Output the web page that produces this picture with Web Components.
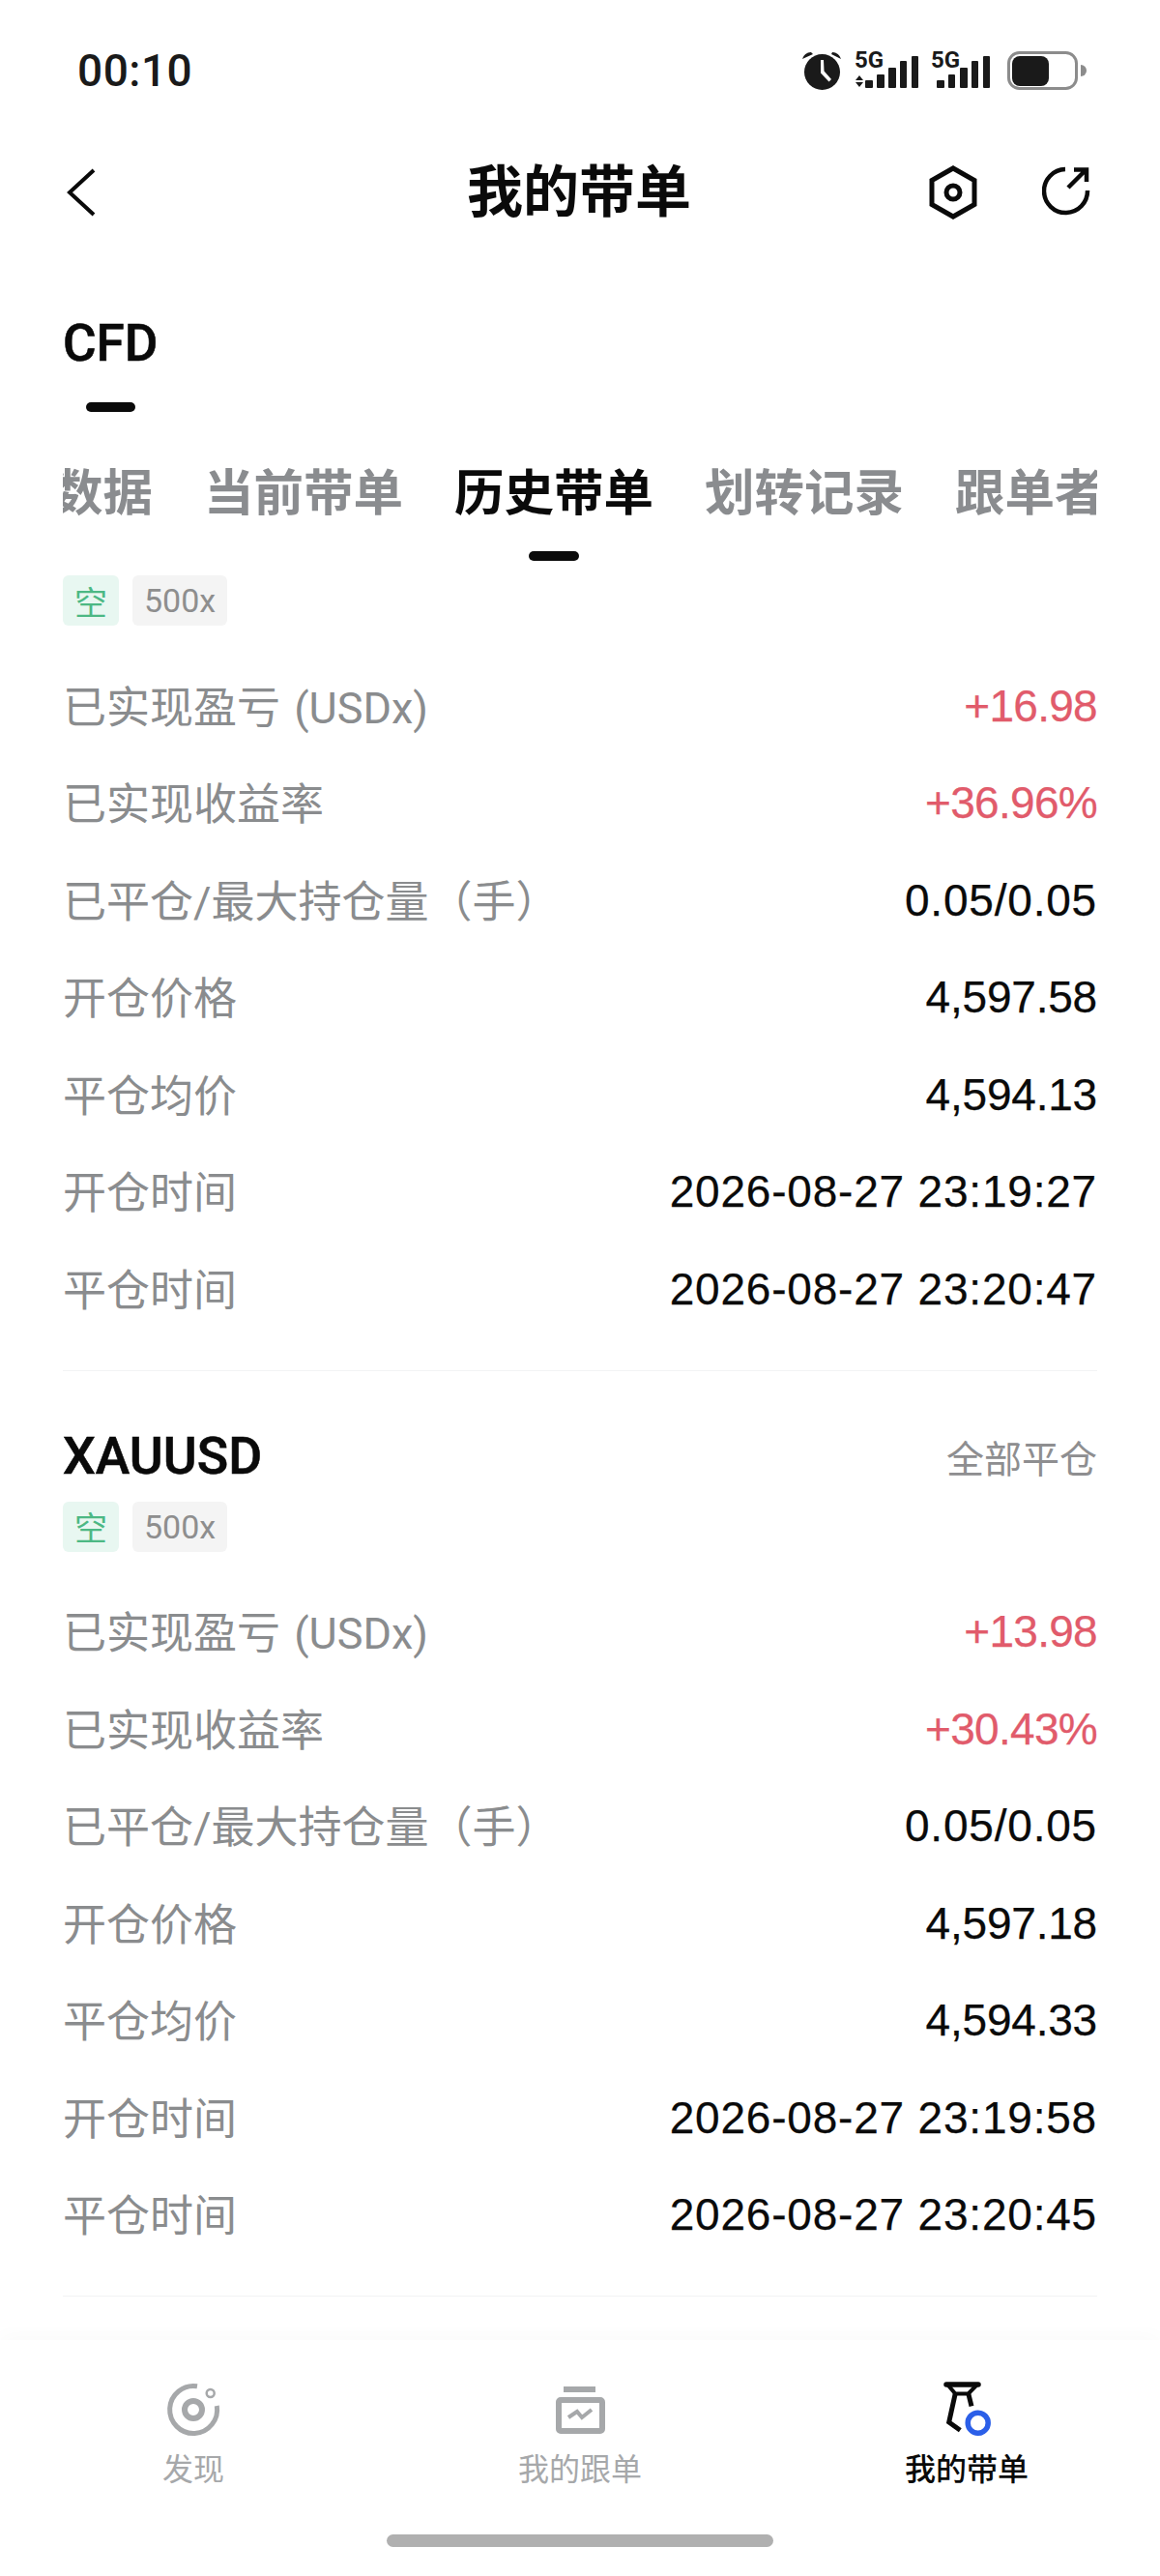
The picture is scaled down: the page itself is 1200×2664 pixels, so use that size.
<!DOCTYPE html>
<html lang="zh-CN">
<head>
<meta charset="utf-8">
<title>我的带单</title>
<style>
html, body { margin: 0; background: #fff; }
body {
    width: 1200px;
    height: 2664px;
    overflow: hidden;
    display: flex;
    flex-direction: column;
    font-family: Roboto, "Noto Sans CJK SC", sans-serif;
    color: #0a0a0a;
}
</style>
</head>
<body>
<status-bar></status-bar>
<nav-header>我的带单</nav-header>
<main-list>
    <order-card>
        <order-row tone="up" value="+16.98">已实现盈亏 (USDx)</order-row>
        <order-row tone="up" value="+36.96%">已实现收益率</order-row>
        <order-row kind="ratio" value="0.05/0.05">已平仓/最大持仓量（手）</order-row>
        <order-row value="4,597.58">开仓价格</order-row>
        <order-row value="4,594.13">平仓均价</order-row>
        <order-row kind="date" value="2026-08-27 23:19:27">开仓时间</order-row>
        <order-row kind="date" value="2026-08-27 23:20:47">平仓时间</order-row>
    </order-card>
    <order-card symbol="XAUUSD" action="全部平仓">
        <order-row tone="up" value="+13.98">已实现盈亏 (USDx)</order-row>
        <order-row tone="up" value="+30.43%">已实现收益率</order-row>
        <order-row kind="ratio" value="0.05/0.05">已平仓/最大持仓量（手）</order-row>
        <order-row value="4,597.18">开仓价格</order-row>
        <order-row value="4,594.33">平仓均价</order-row>
        <order-row kind="date" value="2026-08-27 23:19:58">开仓时间</order-row>
        <order-row kind="date" value="2026-08-27 23:20:45">平仓时间</order-row>
    </order-card>
</main-list>
<tab-bar></tab-bar>

<script>
class StatusBar extends HTMLElement {
    constructor() {
        super()
        this.shadowDOM = this.attachShadow({mode : "open"})
    }
    connectedCallback() {
        this.shadowDOM.innerHTML = `
            <style>
            :host { display: flex; align-items: center; justify-content: space-between; height: 146px; padding: 0 74px 0 80px; box-sizing: border-box; }
            .time { font-size: 46px; font-weight: 500; line-height: 146px; letter-spacing: .5px; color: #1a1a1a; }
            svg { display: block; overflow: visible; }
            text { font-family: Roboto, sans-serif; font-weight: 700; font-size: 24px; fill: #1a1a1a; }
            </style>
            <span class="time">00:10</span>
            <svg width="300" height="44" viewBox="0 0 300 44">
                <g fill="#1a1a1a">
                    <circle cx="24.5" cy="23.5" r="18.5"/>
                    <path d="M4 10 A9 9 0 0 1 13 3 L15 5 Z"/>
                    <path d="M44 10 A9 9 0 0 0 35 3 L34 5 Z"/>
                    <path d="M23 11 L26 11 L26.5 22.5 L34 31 L31.5 33.5 L23 24.5 Z" fill="#fff"/>
                    <text x="58" y="19">5G</text>
                    <path d="M63 27 L67 32 L59 32 Z M59 34 L67 34 L63 39 Z"/>
                    <rect x="69" y="32" width="8" height="8" rx="1"/>
                    <rect x="81" y="26" width="8" height="14" rx="1"/>
                    <rect x="93" y="19" width="8" height="21" rx="1"/>
                    <rect x="105" y="12" width="7" height="28" rx="1"/>
                    <rect x="117" y="7" width="7" height="33" rx="1"/>
                    <text x="137" y="19">5G</text>
                    <rect x="143" y="32" width="8" height="8" rx="1"/>
                    <rect x="155" y="26" width="7" height="14" rx="1"/>
                    <rect x="167" y="19" width="8" height="21" rx="1"/>
                    <rect x="179" y="12" width="7" height="28" rx="1"/>
                    <rect x="191" y="7" width="7" height="33" rx="1"/>
                    <rect x="221" y="7" width="38" height="31" rx="8"/>
                </g>
                <rect x="217.5" y="3.5" width="70" height="37" rx="11" fill="none" stroke="#8c8c8c" stroke-width="3"/>
                <path d="M292 16 A6 6 0 0 1 292 28 Z" fill="#8c8c8c"/>
            </svg>
        `
    }
}
customElements.define("status-bar", StatusBar)

class NavHeader extends HTMLElement {
    constructor() {
        super()
        this.shadowDOM = this.attachShadow({mode : "open"})
    }
    connectedCallback() {
        this.shadowDOM.innerHTML = `
            <style>
            :host { display: grid; grid-template-columns: 1fr auto 1fr; align-items: center; height: 106px; padding: 0 72px 0 68px; }
            h1 { margin: 0 0 0 2px; font-size: 58px; font-weight: 700; line-height: 106px; color: #0a0a0a; }
            .actions { display: flex; justify-content: flex-end; gap: 67px; }
            svg { display: block; fill: none; stroke: #0a0a0a; }
            </style>
            <svg width="32" height="52" viewBox="0 0 32 52" stroke-width="4"><path d="M29 3 L4 26 L29 49"/></svg>
            <h1><slot></slot></h1>
            <div class="actions">
                <svg width="50" height="56" viewBox="0 0 50 56" stroke-width="5">
                    <path d="M25 3 L47 15.5 L47 40.5 L25 53 L3 40.5 L3 15.5 Z"/>
                    <circle cx="25" cy="28" r="7"/>
                </svg>
                <svg width="50" height="52" viewBox="0 0 50 52" stroke-width="4.5">
                    <path d="M24 4 A22.5 22.5 0 1 0 47 26"/>
                    <path d="M27 23 L45 5 M33 4.5 L46 4.5 L46 17"/>
                </svg>
            </div>
        `
    }
}
customElements.define("nav-header", NavHeader)

class CoinTitle extends HTMLElement {
    constructor() {
        super()
        this.shadowDOM = this.attachShadow({mode : "open"})
    }
    connectedCallback() {
        this.shadowDOM.innerHTML = `
            <style>
            :host { display: block; padding: 0 65px; }
            .name { display: inline-flex; flex-direction: column; align-items: center; gap: 30px; font-size: 53px; font-weight: 500; line-height: 62px; -webkit-text-stroke: .6px #0a0a0a; }
            .mark { width: 51px; height: 10px; border-radius: 5px; background: #0a0a0a; }
            </style>
            <div class="name"><slot></slot><span class="mark"></span></div>
        `
    }
}
customElements.define("coin-title", CoinTitle)

class PageTab extends HTMLElement {
    constructor() {
        super()
        this.shadowDOM = this.attachShadow({mode : "open"})
    }
    connectedCallback() {
        this.shadowDOM.innerHTML = `
            <style>
            :host { display: flex; flex-direction: column; align-items: center; gap: 28px; flex: none; font-size: 51.5px; font-weight: 700; line-height: 62px; color: #8a8c8f; white-space: nowrap; }
            :host([active]) { color: #0a0a0a; }
            .mark { width: 52px; height: 10px; border-radius: 5px; }
            :host([active]) .mark { background: #0a0a0a; }
            </style>
            <slot></slot>
            <span class="mark"></span>
        `
    }
}
customElements.define("page-tab", PageTab)

class PageTabs extends HTMLElement {
    constructor() {
        super()
        this.shadowDOM = this.attachShadow({mode : "open"})
    }
    connectedCallback() {
        this.shadowDOM.innerHTML = `
            <style>
            :host { display: block; margin: 0 65px; overflow: hidden; }
            .track { display: flex; gap: 53px; margin-left: -10px; }
            </style>
            <div class="track"><slot></slot></div>
        `
    }
}
customElements.define("page-tabs", PageTabs)

class MainList extends HTMLElement {
    constructor() {
        super()
        this.shadowDOM = this.attachShadow({mode : "open"})
    }
    connectedCallback() {
        this.shadowDOM.innerHTML = `
            <style>
            :host { display: flex; flex-direction: column; flex: 1; min-height: 0; overflow: hidden; }
            .title { margin-top: 72px; }
            .tabs { margin-top: 54px; margin-bottom: 15px; }
            </style>
            <coin-title class="title">CFD</coin-title>
            <page-tabs class="tabs">
                <page-tab>数据</page-tab>
                <page-tab>当前带单</page-tab>
                <page-tab active>历史带单</page-tab>
                <page-tab>划转记录</page-tab>
                <page-tab>跟单者</page-tab>
            </page-tabs>
            <slot></slot>
        `
    }
}
customElements.define("main-list", MainList)

class TagPill extends HTMLElement {
    constructor() {
        super()
        this.shadowDOM = this.attachShadow({mode : "open"})
    }
    connectedCallback() {
        this.shadowDOM.innerHTML = `
            <style>
            :host { display: inline-flex; align-items: center; height: 52px; padding: 0 12px; border-radius: 6px; font-size: 34px; background: #f4f4f4; color: #8e8e8e; }
            :host([tone="short"]) { background: #e8f7f1; color: #4cb884; }
            </style>
            <slot></slot>
        `
    }
}
customElements.define("tag-pill", TagPill)

class OrderCard extends HTMLElement {
    constructor() {
        super()
        this.shadowDOM = this.attachShadow({mode : "open"})
    }
    connectedCallback() {
        const symbol = this.getAttribute("symbol")
        const action = this.getAttribute("action")
        this.shadowDOM.innerHTML = `
            <style>
            :host { display: block; margin: 0 65px; padding-bottom: 35px; border-bottom: 1.5px solid #f2f3f4; }
            :host(:not(:first-of-type)) { padding-top: 53px; }
            .head { display: flex; align-items: center; justify-content: space-between; height: 70px; margin-bottom: 12px; }
            .symbol { font-size: 53.5px; font-weight: 500; -webkit-text-stroke: .6px #0a0a0a; color: #0a0a0a; }
            .action { font-size: 39px; color: #8e8e90; }
            .tags { display: flex; gap: 14px; margin-bottom: 31px; }
            </style>
            ${symbol ? `<div class="head"><span class="symbol">${symbol}</span><span class="action">${action}</span></div>` : ""}
            <div class="tags"><tag-pill tone="short">空</tag-pill><tag-pill>500x</tag-pill></div>
            <slot></slot>
        `
    }
}
customElements.define("order-card", OrderCard)

class OrderRow extends HTMLElement {
    constructor() {
        super()
        this.shadowDOM = this.attachShadow({mode : "open"})
    }
    connectedCallback() {
        this.shadowDOM.innerHTML = `
            <style>
            :host { display: flex; align-items: center; justify-content: space-between; height: 100.5px; font-size: 45px; }
            .label { color: #8a8c8e; word-spacing: 3px; }
            .value { color: #0a0a0a; font-family: "Liberation Sans", sans-serif; font-size: 46px; padding-top: 3px; letter-spacing: -.2px; -webkit-text-stroke: .25px currentColor; }
            :host([tone="up"]) .value { color: #e15b6b; letter-spacing: -.7px; }
            :host([kind="date"]) .value { letter-spacing: .8px; }
            :host([kind="ratio"]) .value { letter-spacing: .8px; }
            </style>
            <span class="label"><slot></slot></span>
            <span class="value">${this.getAttribute("value")}</span>
        `
    }
}
customElements.define("order-row", OrderRow)

class TabItem extends HTMLElement {
    constructor() {
        super()
        this.shadowDOM = this.attachShadow({mode : "open"})
    }
    connectedCallback() {
        this.shadowDOM.innerHTML = `
            <style>
            :host { display: flex; flex-direction: column; align-items: center; gap: 13px; color: #a6a8aa; font-size: 32px; line-height: 38px; }
            :host([active]) { color: #0a0a0a; font-weight: 500; }
            </style>
            <slot name="icon"></slot>
            <slot></slot>
        `
    }
}
customElements.define("tab-item", TabItem)

class TabBar extends HTMLElement {
    constructor() {
        super()
        this.shadowDOM = this.attachShadow({mode : "open"})
    }
    connectedCallback() {
        this.shadowDOM.innerHTML = `
            <style>
            :host { display: flex; flex-direction: column; height: 244px; box-sizing: border-box; padding-top: 42px; background: #fff; box-shadow: 0 -4px 20px rgba(0,0,0,.025); position: relative; }
            .items { display: grid; grid-template-columns: repeat(3, 400px); }
            .home { width: 400px; height: 13px; margin: 48px auto 0; border-radius: 7px; background: #b0b0b0; }
            svg { display: block; fill: none; }
            </style>
            <div class="items">
                <tab-item>
                    <svg slot="icon" width="60" height="60" viewBox="0 0 60 60" stroke="#a6a8aa">
                        <path d="M34 5.8 A24.5 24.5 0 1 0 54.3 26" stroke-width="5"/>
                        <circle cx="30" cy="30" r="9" stroke-width="6"/>
                        <circle cx="47.7" cy="13" r="4" stroke-width="2.5"/>
                    </svg>
                    发现
                </tab-item>
                <tab-item>
                    <svg slot="icon" width="60" height="60" viewBox="0 0 60 60">
                        <rect x="13" y="6" width="33" height="6" fill="#a6a8aa"/>
                        <rect x="8" y="20" width="45" height="32" rx="2" stroke="#a6a8aa" stroke-width="6"/>
                        <path d="M18 38 L27 32 L32 38 L42 30" stroke="#a6a8aa" stroke-width="4"/>
                    </svg>
                    我的跟单
                </tab-item>
                <tab-item active>
                    <svg slot="icon" width="60" height="60" viewBox="0 0 60 60">
                        <path d="M9 4 L42 4" stroke="#0a0a0a" stroke-width="5.5" stroke-linecap="round"/>
                        <path d="M11 5 L18.3 13.5 L31.7 13.5 L40 5" stroke="#0a0a0a" stroke-width="4"/>
                        <path d="M18.3 13 L11.7 43 L23.3 51.3 M31.7 13 L35 26.3" stroke="#0a0a0a" stroke-width="5"/>
                        <circle cx="41.7" cy="43.7" r="10.5" stroke="#2b5fe8" stroke-width="5.5"/>
                    </svg>
                    我的带单
                </tab-item>
            </div>
            <div class="home"></div>
        `
    }
}
customElements.define("tab-bar", TabBar)
</script>
</body>
</html>
